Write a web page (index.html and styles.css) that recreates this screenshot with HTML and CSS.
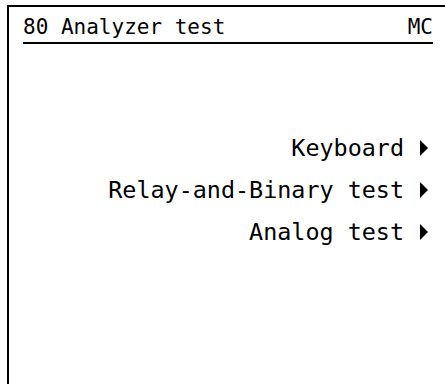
FILE: index.html
```html
<!DOCTYPE html>
<html lang="en">
<head>
    <meta charset="UTF-8">
    <meta name="viewport" content="width=device-width, initial-scale=1.0">
    <title>80 Analyzer test</title>
    <link rel="stylesheet" href="styles.css">
</head>
<body>

<div class="screen">
    <div class="kopf">
        <span>80 Analyzer test</span>
        <span>MC</span>
    </div>

    <ul class="menu">
        <li>Keyboard<svg class="pfeil" viewBox="0 0 8 16"><polygon points="0,0 8,8 0,16"/></svg></li>
        <li>Relay-and-Binary test<svg class="pfeil" viewBox="0 0 8 16"><polygon points="0,0 8,8 0,16"/></svg></li>
        <li>Analog test<svg class="pfeil" viewBox="0 0 8 16"><polygon points="0,0 8,8 0,16"/></svg></li>
    </ul>
</div>

</body>
</html>
```

FILE: styles.css
```css
html, body {
    margin: 0;
    padding: 0;
    background: #fff;
}

body {
    font-family: "DejaVu Sans Mono", "Liberation Mono", monospace;
    font-size: 23.4px;
    color: #000;
    overflow: hidden;
}

.screen {
    box-sizing: border-box;
    margin: 5px 0 0 7px;
    height: calc(100vh - 5px);
    border-top: 2px solid #000;
    border-left: 2px solid #000;
}

.kopf {
    display: flex;
    justify-content: space-between;
    align-items: baseline;
    margin: 0 12px 0 14px;
    padding: 7px 0 2px 0;
    font-size: 21px;
    line-height: 26px;
    border-bottom: 2px solid #000;
}

.menu {
    list-style: none;
    margin: 83px 17px 0 0;
    padding: 0;
}

.menu li {
    display: flex;
    justify-content: flex-end;
    align-items: center;
    gap: 16px;
    line-height: 42px;
}

.pfeil {
    width: 8px;
    height: 16px;
    fill: #000;
}
```
